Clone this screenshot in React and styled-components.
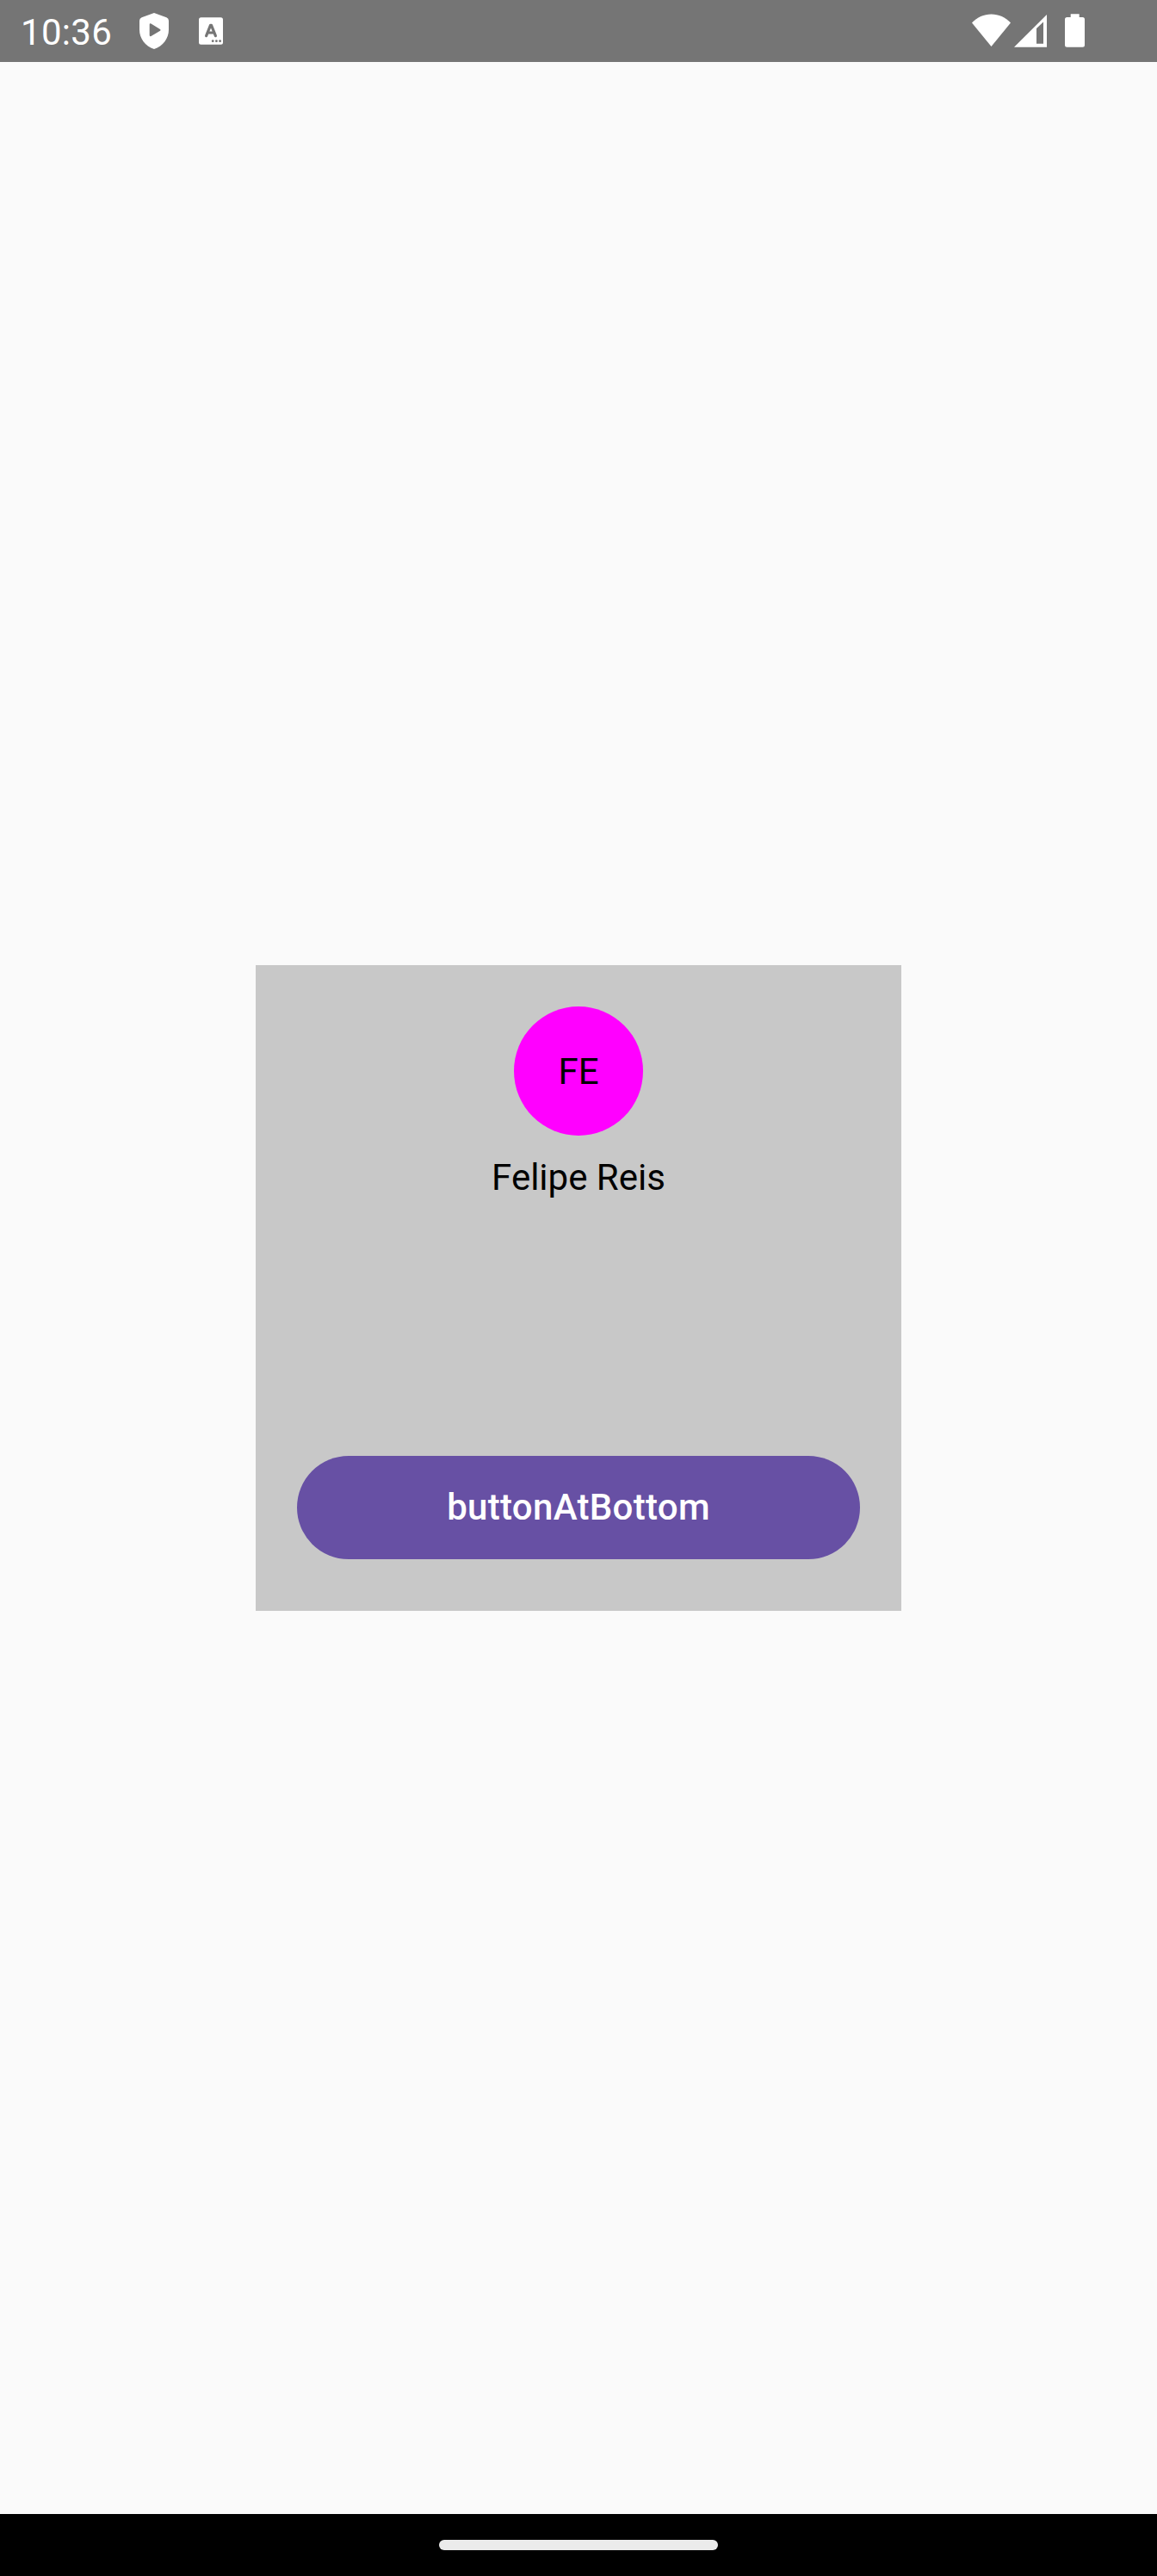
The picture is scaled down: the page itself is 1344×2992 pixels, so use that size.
import React from "react";
import styled, { createGlobalStyle } from "styled-components";

const GlobalStyle = createGlobalStyle`
  * { box-sizing: border-box; }
  body { margin: 0; background: #fafafa; }
`;

const Screen = styled.div`
  display: flex;
  flex-direction: column;
  width: 1344px;
  height: 2992px;
  background: #fafafa;
  font-family: Roboto, "Noto Sans", sans-serif;
  font-size: 42px;
  line-height: 50px;
  color: #000;
`;

const StatusBar = styled.header`
  display: flex;
  justify-content: space-between;
  height: 72px;
  padding: 0 84px 0 24px;
  background: #757575;
  color: #fff;
`;

const StatusGroup = styled.div`
  display: flex;
  align-items: flex-start;
`;

const Clock = styled.span`
  width: 138px;
  padding-top: 13px;
  letter-spacing: 0.3px;
  white-space: nowrap;
`;

const StatusIcon = styled.svg`
  display: block;
  flex: none;
  width: ${(p) => p.$width}px;
  height: 72px;
  margin-left: ${(p) => p.$gap || 0}px;
  fill: #fff;
`;

const Content = styled.main`
  flex: 1;
  display: flex;
  align-items: center;
  justify-content: center;
`;

const Card = styled.section`
  display: flex;
  flex-direction: column;
  align-items: center;
  width: 750px;
  height: 750px;
  padding: 48px 48px 60px;
  background: #c8c8c8;
`;

const Avatar = styled.div`
  display: flex;
  align-items: center;
  justify-content: center;
  width: 150px;
  height: 150px;
  padding-top: 2px;
  border-radius: 50%;
  background: #f0f;
`;

const Name = styled.div`
  margin-top: 24px;
`;

const Button = styled.button`
  width: 100%;
  height: 120px;
  margin-top: auto;
  padding: 0;
  border: 0;
  border-radius: 60px;
  background: #6750a4;
  color: #fff;
  font: 500 42px/60px Roboto, "Noto Sans", sans-serif;
  letter-spacing: 0.3px;
`;

const NavigationBar = styled.footer`
  display: flex;
  align-items: center;
  justify-content: center;
  height: 72px;
  background: #000;
`;

const Handle = styled.div`
  width: 324px;
  height: 12px;
  border-radius: 6px;
  background: #ebebeb;
`;

const ShieldIcon = () => (
  <StatusIcon $width={34} viewBox="0 0 34 72">
    <path
      fillRule="evenodd"
      d="M17 15 31.4 20.2Q34 21.200 34 24V34.500C34 44.500 27.500 53.500 17 57C6.500 53.500 0 44.500 0 34.500V24Q0 21.200 2.600 20.200ZM11.700 28.800V40.800Q11.700 42.900 13.500 42L24 35.700Q25.300 34.800 24 33.900L13.500 27.600Q11.700 26.700 11.700 28.800Z"
    />
  </StatusIcon>
);

const LetterCardIcon = () => (
  <StatusIcon $width={28} $gap={35} viewBox="0 0 28 72">
    <rect y="20.200" width="28" height="31.600" rx="2.500" />
    <path
      d="M8.600 41.700 13.500 29.300H14.500L19.400 41.700M10.300 38H17.700"
      fill="none"
      stroke="#757575"
      strokeWidth="3.200"
      strokeLinecap="round"
      strokeLinejoin="round"
    />
    <g fill="#757575">
      <circle cx="16.200" cy="47.700" r="1.400" />
      <circle cx="20.400" cy="47.700" r="1.400" />
      <circle cx="24.600" cy="47.700" r="1.400" />
    </g>
  </StatusIcon>
);

const WifiIcon = () => (
  <StatusIcon $width={45} viewBox="0 0 45 72">
    <path d="M0 26.500C6 20 14 16.500 22.500 16.500S39 20 45 26.500L22.500 54Z" />
  </StatusIcon>
);

const SignalIcon = () => (
  <StatusIcon $width={38} $gap={4} viewBox="0 0 38 72">
    <path fillRule="evenodd" d="M0 54.700 38 16.900V54.700ZM26 33V50.700H34V25.500Z" />
  </StatusIcon>
);

const BatteryIcon = () => (
  <StatusIcon $width={23} $gap={21} viewBox="0 0 23 72">
    <path d="M6.700 16.200H16.700V20H20.500Q23 20 23 22.500V52.200Q23 54.700 20.500 54.700H2.500Q0 54.700 0 52.200V22.500Q0 20 2.500 20H6.700Z" />
  </StatusIcon>
);

export default function App() {
  return (
    <>
      <GlobalStyle />
      <Screen>
        <StatusBar>
          <StatusGroup>
            <Clock>10:36</Clock>
            <ShieldIcon />
            <LetterCardIcon />
          </StatusGroup>
          <StatusGroup>
            <WifiIcon />
            <SignalIcon />
            <BatteryIcon />
          </StatusGroup>
        </StatusBar>
        <Content>
          <Card>
            <Avatar>FE</Avatar>
            <Name>Felipe Reis</Name>
            <Button>buttonAtBottom</Button>
          </Card>
        </Content>
        <NavigationBar>
          <Handle />
        </NavigationBar>
      </Screen>
    </>
  );
}
